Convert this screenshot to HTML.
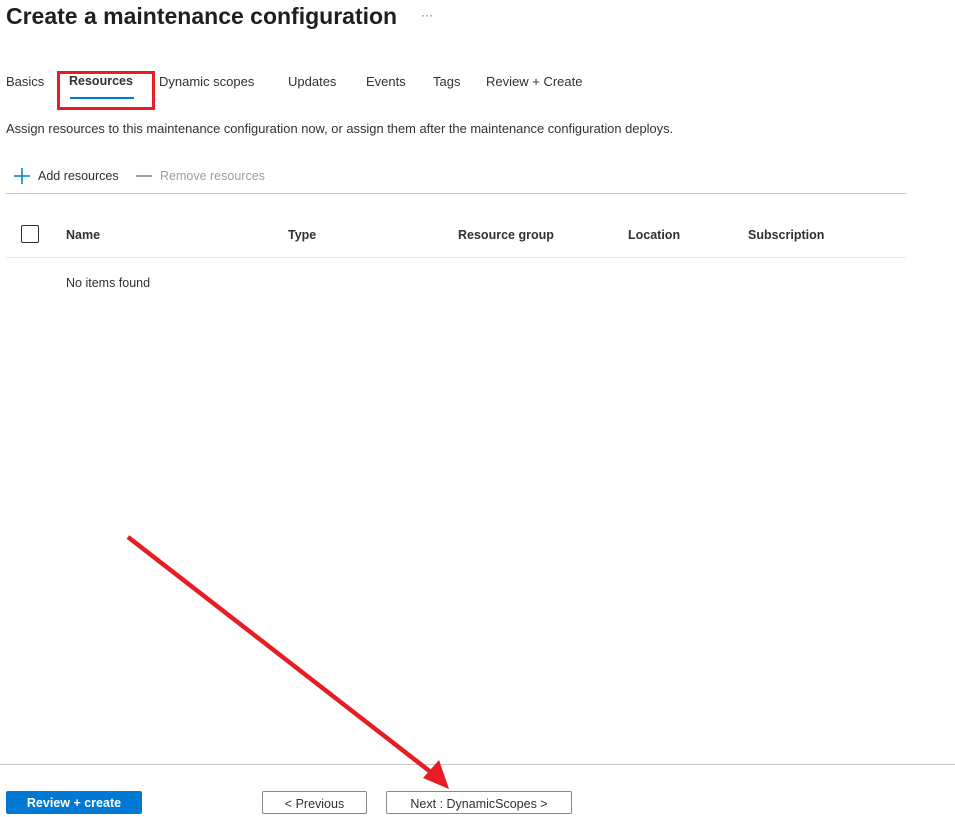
<!DOCTYPE html>
<html><head><style>
body{margin:0;width:955px;height:817px;background:#fff;font-family:"Segoe UI","Liberation Sans",sans-serif;color:#323130;position:relative;overflow:hidden}
.a{position:absolute;white-space:nowrap}
.t{font-size:13px;top:74px}
.h{font-size:12.5px;font-weight:600;top:228px}
.btn{position:absolute;top:791px;height:23px;box-sizing:border-box;font-size:12.5px;text-align:center;line-height:25px}
</style></head><body>
<div class="a" style="left:6px;top:3px;font-size:23px;font-weight:600;color:#201f1e">Create a maintenance configuration</div>
<div class="a" style="left:421px;top:8px;font-size:12px;color:#605e5c">···</div>
<div class="a t" style="left:6px">Basics</div>
<div class="a t" style="left:69px;font-weight:600;font-size:12.5px">Resources</div>
<div class="a" style="left:70px;top:97px;width:64px;height:2px;background:#0078d4"></div>
<div class="a" style="left:57px;top:71px;width:92px;height:33px;border:3px solid #e81c24"></div>
<div class="a t" style="left:159px">Dynamic scopes</div>
<div class="a t" style="left:288px">Updates</div>
<div class="a t" style="left:366px">Events</div>
<div class="a t" style="left:433px">Tags</div>
<div class="a t" style="left:486px">Review + Create</div>
<div class="a" style="left:6px;top:121px;font-size:12.9px">Assign resources to this maintenance configuration now, or assign them after the maintenance configuration deploys.</div>
<svg class="a" style="left:13px;top:167px" width="18" height="18"><path d="M9 1v16M1 9h16" stroke="#0078d4" stroke-width="1.5"/></svg>
<div class="a" style="left:38px;top:169px;font-size:12.5px">Add resources</div>
<div class="a" style="left:136px;top:175px;width:16px;height:1.5px;background:#a19f9d"></div>
<div class="a" style="left:160px;top:169px;font-size:12.5px;color:#a19f9d">Remove resources</div>
<div class="a" style="left:6px;top:193px;width:900px;height:1px;background:#c8c6c4"></div>
<div class="a" style="left:21px;top:225px;width:18px;height:18px;box-sizing:border-box;border:1px solid #323130;border-radius:2px"></div>
<div class="a h" style="left:66px">Name</div>
<div class="a h" style="left:288px">Type</div>
<div class="a h" style="left:458px">Resource group</div>
<div class="a h" style="left:628px">Location</div>
<div class="a h" style="left:748px">Subscription</div>
<div class="a" style="left:6px;top:257px;width:900px;height:1px;background:#edebe9"></div>
<div class="a" style="left:66px;top:276px;font-size:12.5px">No items found</div>
<div class="a" style="left:0;top:764px;width:955px;height:1px;background:#c8c6c4"></div>
<div class="btn" style="left:6px;width:136px;background:#0078d4;color:#fff;font-weight:600;border-radius:2px">Review + create</div>
<div class="btn" style="left:262px;width:105px;border:1px solid #8a8886;border-radius:2px">&lt; Previous</div>
<div class="btn" style="left:386px;width:186px;border:1px solid #8a8886;border-radius:2px">Next : DynamicScopes &gt;</div>
<svg class="a" style="left:0;top:0" width="955" height="817"><line x1="128" y1="537" x2="432" y2="773" stroke="#e81c24" stroke-width="4.5"/><polygon points="449,789 423,778 439,760" fill="#e81c24"/></svg>
</body></html>
